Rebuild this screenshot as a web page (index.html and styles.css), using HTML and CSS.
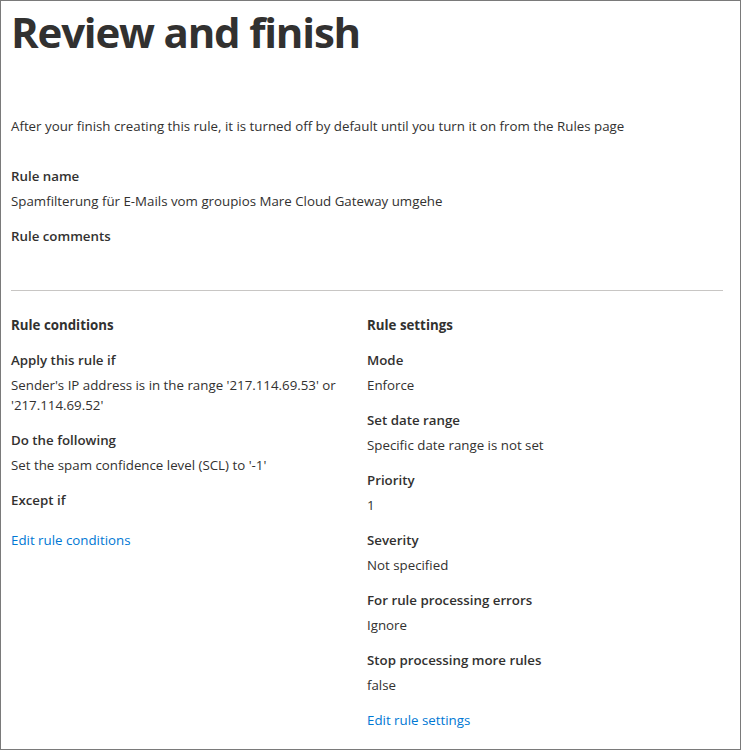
FILE: index.html
```html
<!DOCTYPE html>
<html lang="en">
<head>
<meta charset="utf-8">
<title>Review and finish</title>
<link rel="stylesheet" href="styles.css">
</head>
<body>
<main class="panel">
  <h1 class="title">Review and finish</h1>
  <p class="intro">After your finish creating this rule, it is turned off by default until you turn it on from the Rules page</p>

  <section class="summary">
    <div class="field">
      <div class="label">Rule name</div>
      <div class="value">Spamfilterung für E-Mails vom groupios Mare Cloud Gateway umgehe</div>
    </div>
    <div class="field">
      <div class="label">Rule comments</div>
      <div class="value"></div>
    </div>
  </section>

  <hr class="divider">

  <div class="columns">
    <section class="column">
      <h2 class="heading">Rule conditions</h2>
      <div class="field">
        <div class="label">Apply this rule if</div>
        <div class="value">Sender's IP address is in the range '217.114.69.53' or '217.114.69.52'</div>
      </div>
      <div class="field">
        <div class="label">Do the following</div>
        <div class="value">Set the spam confidence level (SCL) to '-1'</div>
      </div>
      <div class="field">
        <div class="label">Except if</div>
        <div class="value"></div>
      </div>
      <a class="link" href="#">Edit rule conditions</a>
    </section>
    <section class="column">
      <h2 class="heading">Rule settings</h2>
      <div class="field">
        <div class="label">Mode</div>
        <div class="value">Enforce</div>
      </div>
      <div class="field">
        <div class="label">Set date range</div>
        <div class="value">Specific date range is not set</div>
      </div>
      <div class="field">
        <div class="label">Priority</div>
        <div class="value">1</div>
      </div>
      <div class="field">
        <div class="label">Severity</div>
        <div class="value">Not specified</div>
      </div>
      <div class="field">
        <div class="label">For rule processing errors</div>
        <div class="value">Ignore</div>
      </div>
      <div class="field">
        <div class="label">Stop processing more rules</div>
        <div class="value">false</div>
      </div>
      <a class="link" href="#">Edit rule settings</a>
    </section>
  </div>
</main>
</body>
</html>
```
FILE: styles.css
```css
* { box-sizing: border-box; }
html, body { margin: 0; padding: 0; background: #ffffff; }
body {
  font-family: "Open Sans", "Noto Sans", "Liberation Sans", sans-serif;
  font-size: 13.3px;
  line-height: 20px;
  color: #323130;
}
.panel {
  width: 741px;
  height: 750px;
  border: 1px solid #7a7a7a;
  padding: 0 17px 0 10px;
  overflow: hidden;
}
.title {
  margin: 3px 0 0 0;
  font-size: 42px;
  line-height: 56px;
  font-weight: 700;
  letter-spacing: -1.2px;
  color: #323130;
}
.intro {
  margin: 56px 0 0 0;
}
.summary { margin-top: 30px; }
.field {
  display: flex;
  flex-direction: column;
  margin-bottom: 15px;
}
.label { font-weight: 600; }
.value { margin-top: 5px; }
.value:empty { height: 0; }
.divider {
  border: 0;
  border-top: 1px solid #c8c6c4;
  margin: 39px 0 24px 0;
  height: 0;
}
.columns {
  display: grid;
  grid-template-columns: 356px 356px;
}
.heading {
  margin: 0 0 15px 0;
  font-size: 13.3px;
  line-height: 20px;
  font-weight: 700;
}
.link {
  display: inline-block;
  color: #0078d4;
  text-decoration: none;
}
```
